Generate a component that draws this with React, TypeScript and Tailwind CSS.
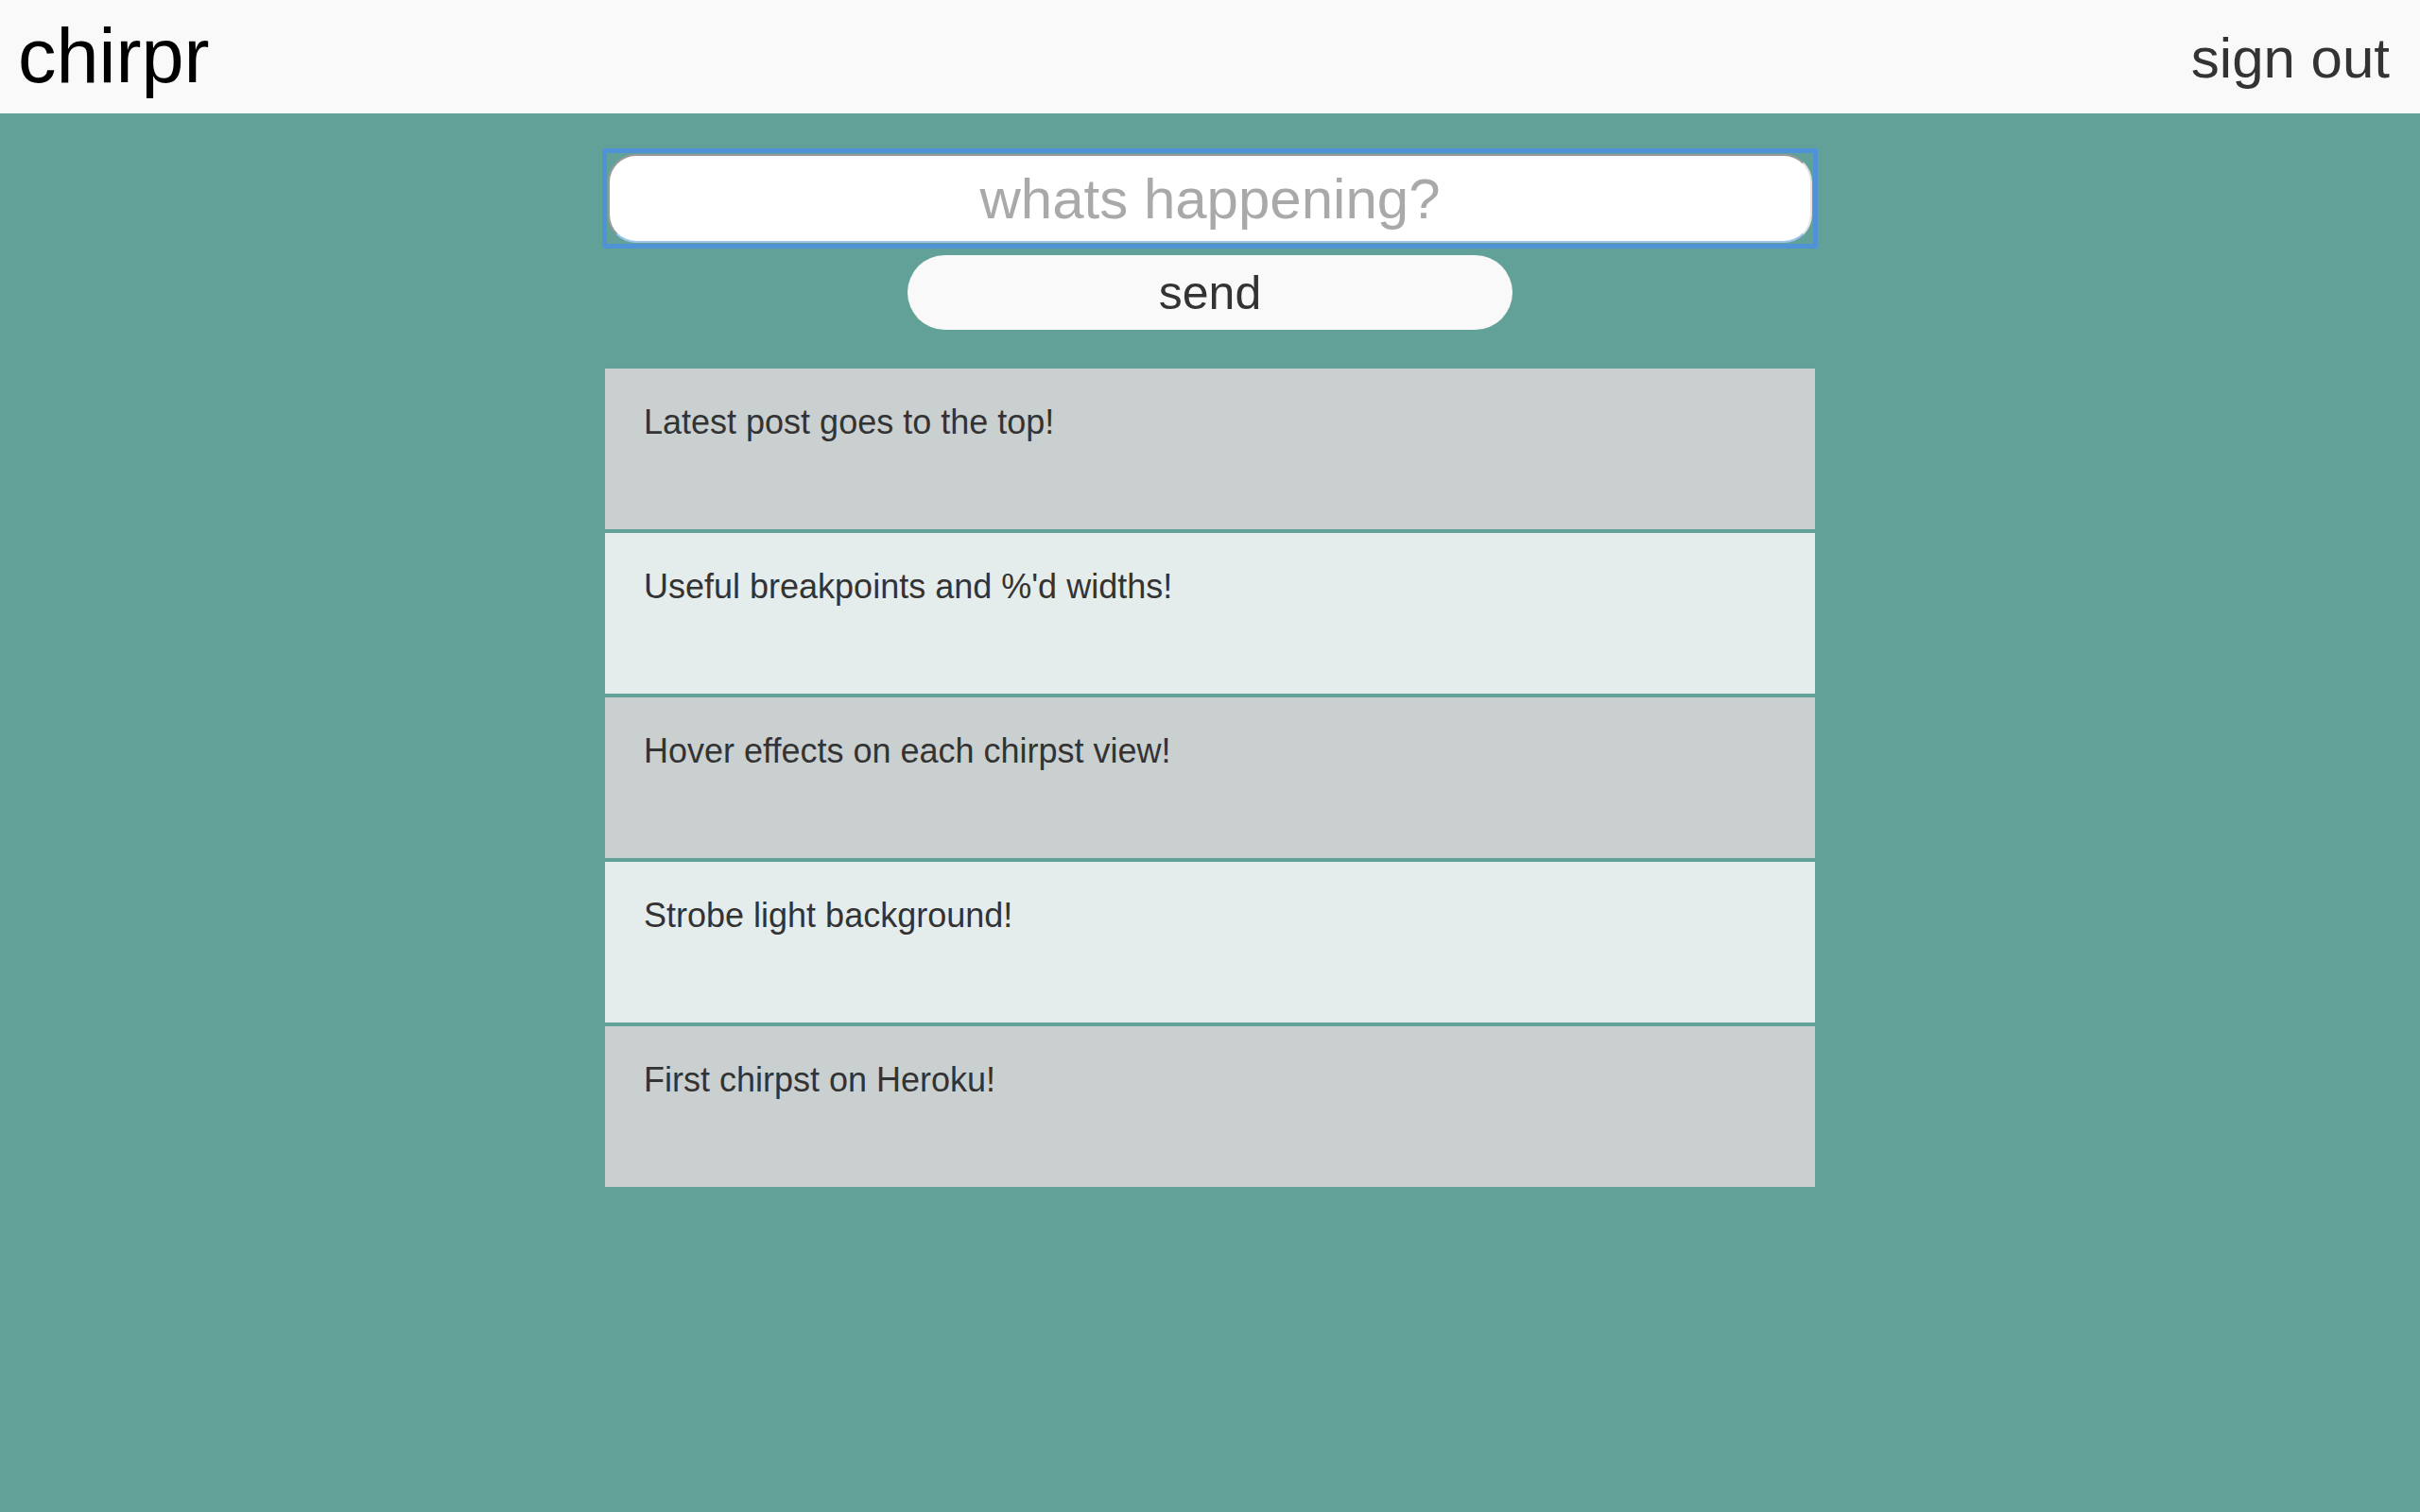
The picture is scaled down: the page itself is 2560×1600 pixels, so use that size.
import React from 'react';

const posts = [
  'Latest post goes to the top!',
  "Useful breakpoints and %'d widths!",
  'Hover effects on each chirpst view!',
  'Strobe light background!',
  'First chirpst on Heroku!',
];

const App = () => {
  return (
    <div className="min-h-screen bg-[#62a198] font-['Liberation_Sans',Arial,sans-serif]">
      <header className="h-[120px] bg-[#f9f9f9] flex justify-between items-center pl-[19px] pr-[32px]">
        <h1 className="text-[81px] text-black leading-normal">chirpr</h1>
        <a className="text-[60px] text-[#333] leading-normal mt-[4px] cursor-pointer">sign out</a>
      </header>

      <main className="flex flex-col items-center">
        {/* focused input keeps the square blue focus ring */}
        <div className="mt-[37px] w-[1286px] border-[5px] border-[#4f93d6] p-[1px]">
          <input
            type="text"
            placeholder="whats happening?"
            className="block w-full h-[94px] rounded-[30px] bg-white border-2 border-t-[#9a9a9a] border-l-[#9a9a9a] border-b-[#9cc3ec] border-r-[#e2e2e2] text-center text-[60px] text-[#333] placeholder:text-[#a9a9a9] outline-none"
          />
        </div>

        <button className="mt-[7px] w-[640px] h-[79px] rounded-full bg-[#f9f9f9] text-[50px] text-[#333] leading-none">
          send
        </button>

        <div className="mt-[41px] w-[1280px] flex flex-col gap-[4px]">
          {posts.map((text, i) => (
            <div
              key={i}
              className={`h-[170px] pl-[41px] pr-[38px] pt-[30px] text-[36px] leading-normal text-[#333] ${i % 2 === 0 ? 'bg-[#cad0d0]' : 'bg-[#e5ecec]'}`}
            >
              {text}
            </div>
          ))}
        </div>
      </main>
    </div>
  );
};

export default App;
